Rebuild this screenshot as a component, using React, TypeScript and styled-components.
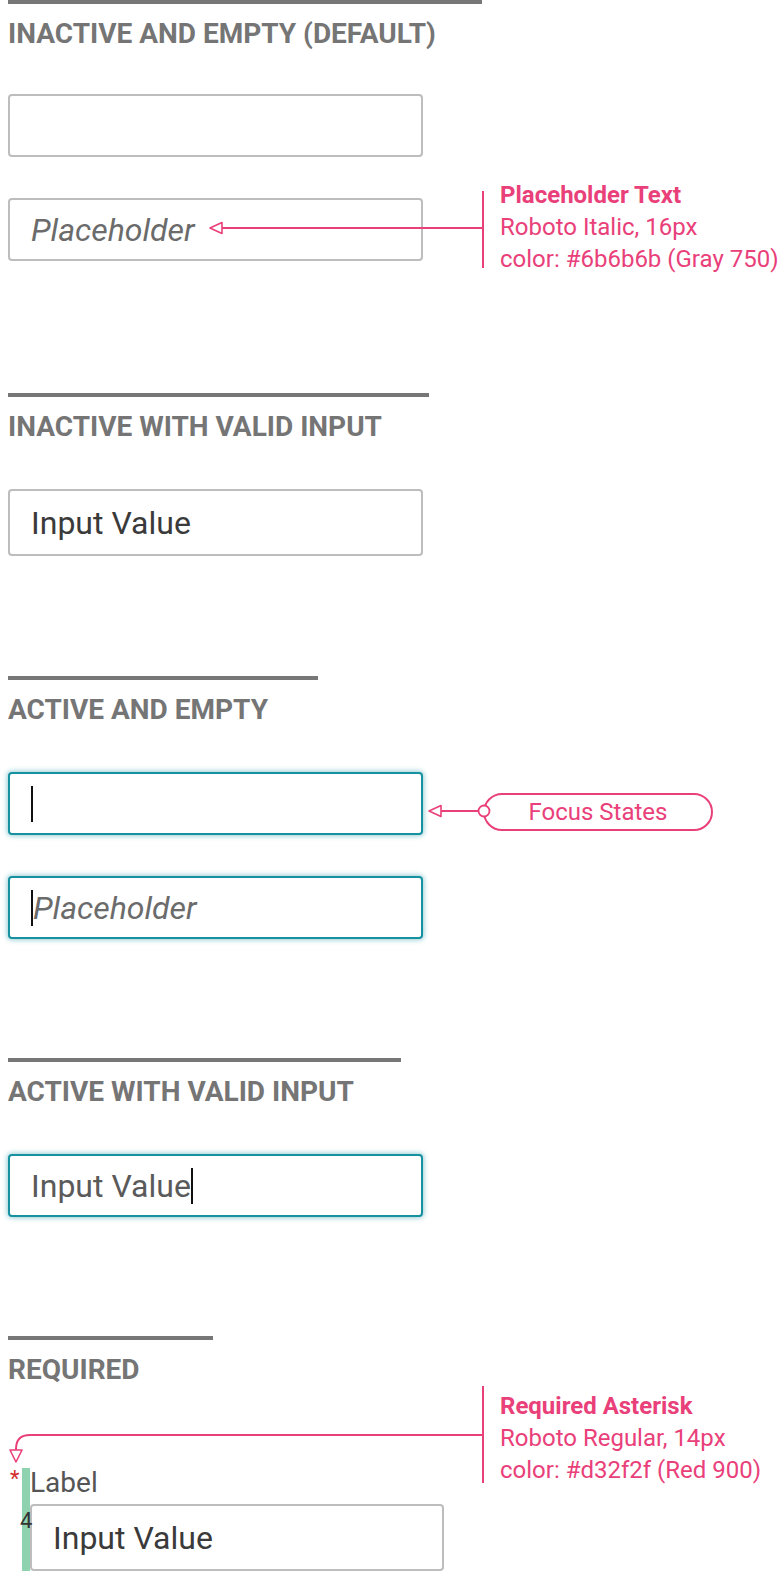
import React from 'react'
import styled, { createGlobalStyle } from 'styled-components'

const pink = '#e9407a'
const teal = '#17909f'

const GlobalStyle = createGlobalStyle`
  html, body {
    margin: 0;
    padding: 0;
    background: #fff;
  }
  body {
    font-family: Roboto, 'Noto Sans', sans-serif;
  }
`

const Page = styled.main`
  width: 778px;
  padding: 0 8px;
  box-sizing: border-box;
`

const Section = styled.section<{ $after: number }>`
  display: flex;
  flex-direction: column;
  align-items: flex-start;
  padding-bottom: ${p => p.$after}px;
`

const Rule = styled.div<{ $width: number }>`
  width: ${p => p.$width}px;
  height: 4px;
  background: #777;
`

const Heading = styled.h2`
  margin: 15px 0 0;
  font-size: 28px;
  line-height: 30px;
  font-weight: 700;
  color: #757575;
  text-transform: uppercase;
  white-space: nowrap;
`

const Fields = styled.div<{ $top?: number }>`
  display: flex;
  flex-direction: column;
  gap: 41px;
  margin-top: ${p => p.$top ?? 47}px;
`

const Row = styled.div`
  position: relative;
  width: 415px;
`

const Box = styled.div<{ $focused?: boolean; $tall?: boolean }>`
  display: flex;
  align-items: center;
  box-sizing: border-box;
  width: 100%;
  height: ${p => (p.$tall ? 67 : 63)}px;
  padding: 0 21px;
  border: 2px solid ${p => (p.$focused ? teal : '#bdbdbd')};
  border-radius: 4px;
  background: #fff;
  box-shadow: ${p => (p.$focused ? '0 0 5px 1px rgba(23, 144, 159, 0.45)' : 'none')};
  font-size: 32px;
  white-space: nowrap;
`

const Value = styled.span<{ $muted?: boolean }>`
  color: ${p => (p.$muted ? '#5a5a5a' : '#3a3a3a')};
`

const Placeholder = styled.span`
  font-style: italic;
  color: #6b6b6b;
`

const Caret = styled.span`
  flex: none;
  width: 2px;
  height: 36px;
  background: #111;
`

const Note = styled.div<{ $top: number; $lineTop: number; $lineBottom: number }>`
  position: absolute;
  left: 474px;
  top: ${p => p.$top}px;
  padding-left: 18px;
  font-size: 24px;
  line-height: 32px;
  color: ${pink};
  white-space: nowrap;

  &::before {
    content: '';
    position: absolute;
    left: 0;
    top: ${p => p.$lineTop}px;
    bottom: ${p => p.$lineBottom}px;
    width: 2px;
    background: ${pink};
  }
`

const NoteTitle = styled.div`
  font-weight: 700;
`

const Connector = styled.svg<{ $left: number; $top: number }>`
  position: absolute;
  left: ${p => p.$left}px;
  top: ${p => p.$top}px;
  overflow: visible;
`

const Pill = styled.div`
  position: absolute;
  left: 475px;
  top: 21px;
  box-sizing: border-box;
  width: 230px;
  height: 38px;
  border: 2px solid ${pink};
  border-radius: 19px;
  display: flex;
  align-items: center;
  justify-content: center;
  font-size: 24px;
  color: ${pink};
  white-space: nowrap;
`

const RequiredArea = styled.div`
  position: relative;
  width: 100%;
  padding-top: 83px;
`

const RequiredField = styled.div`
  position: relative;
  display: flex;
  align-items: stretch;
`

const Asterisk = styled.span`
  width: 14px;
  margin-top: -1px;
  padding-left: 2px;
  box-sizing: border-box;
  font-size: 22px;
  line-height: 24px;
  color: #d32f2f;
`

const SpacingMark = styled.div`
  width: 8px;
  background: #8ed2af;
`

const SpacingValue = styled.span`
  position: absolute;
  left: 12px;
  top: 42px;
  font-size: 22px;
  line-height: 22px;
  color: #333;
`

const FieldColumn = styled.div`
  display: flex;
  flex-direction: column;
  gap: 6px;
  width: 414px;
`

const Label = styled.label`
  font-size: 28px;
  line-height: 30px;
  color: #555;
`

const Arrow = ({ x, y, dir }: { x: number; y: number; dir: 'left' | 'down' }) => {
  const pts =
    dir === 'left'
      ? `${x},${y} ${x + 12},${y - 5.5} ${x + 12},${y + 5.5}`
      : `${x},${y} ${x - 6},${y - 12} ${x + 6},${y - 12}`
  return <polygon points={pts} fill="#fff" stroke={pink} strokeWidth={1.6} strokeLinejoin="round" />
}

export default function App() {
  return (
    <Page>
      <GlobalStyle />

      <Section $after={132}>
        <Rule $width={474} />
        <Heading>Inactive and Empty (Default)</Heading>
        <Fields $top={45}>
          <Row>
            <Box />
          </Row>
          <Row>
            <Box>
              <Placeholder>Placeholder</Placeholder>
            </Box>
            <Connector $left={202} $top={24} width={273} height={12}>
              <line x1={12} y1={6} x2={273} y2={6} stroke={pink} strokeWidth={2} />
              <Arrow x={0} y={6} dir="left" />
            </Connector>
            <Note $top={-19} $lineTop={12} $lineBottom={7}>
              <NoteTitle>Placeholder Text</NoteTitle>
              <div>Roboto Italic, 16px</div>
              <div>color: #6b6b6b (Gray 750)</div>
            </Note>
          </Row>
        </Fields>
      </Section>

      <Section $after={120}>
        <Rule $width={421} />
        <Heading>Inactive with valid input</Heading>
        <Fields>
          <Row>
            <Box $tall>
              <Value>Input Value</Value>
            </Box>
          </Row>
        </Fields>
      </Section>

      <Section $after={119}>
        <Rule $width={310} />
        <Heading>Active and Empty</Heading>
        <Fields>
          <Row>
            <Box $focused>
              <Caret />
            </Box>
            <Pill>Focus States</Pill>
            <Connector $left={419} $top={32} width={64} height={14}>
              <line x1={14} y1={7} x2={51} y2={7} stroke={pink} strokeWidth={2} />
              <Arrow x={2} y={7} dir="left" />
              <circle cx={57} cy={7} r={5.5} fill="#fff" stroke={pink} strokeWidth={1.8} />
            </Connector>
          </Row>
          <Row>
            <Box $focused>
              <Caret />
              <Placeholder>Placeholder</Placeholder>
            </Box>
          </Row>
        </Fields>
      </Section>

      <Section $after={119}>
        <Rule $width={393} />
        <Heading>Active with valid input</Heading>
        <Fields>
          <Row>
            <Box $focused>
              <Value $muted>Input Value</Value>
              <Caret />
            </Box>
          </Row>
        </Fields>
      </Section>

      <Section $after={0}>
        <Rule $width={205} />
        <Heading>Required</Heading>
        <RequiredArea>
          <Connector $left={0} $top={46} width={476} height={36}>
            <path d="M475 4 H22 Q8 4 8 18 V19" fill="none" stroke={pink} strokeWidth={2} />
            <Arrow x={8} y={31} dir="down" />
          </Connector>
          <Note $top={5} $lineTop={-4} $lineBottom={3}>
            <NoteTitle>Required Asterisk</NoteTitle>
            <div>Roboto Regular, 14px</div>
            <div>color: #d32f2f (Red 900)</div>
          </Note>
          <RequiredField>
            <Asterisk>*</Asterisk>
            <SpacingMark />
            <SpacingValue>4</SpacingValue>
            <FieldColumn>
              <Label>Label</Label>
              <Box $tall>
                <Value>Input Value</Value>
              </Box>
            </FieldColumn>
          </RequiredField>
        </RequiredArea>
      </Section>
    </Page>
  )
}
